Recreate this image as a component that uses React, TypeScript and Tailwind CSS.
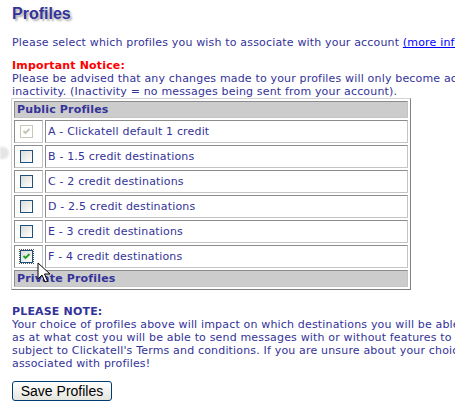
import React from 'react';

const font = { fontFamily: '"DejaVu Sans", Verdana, sans-serif' };

type Box = 'off' | 'on' | 'disabled';

function CheckBox({ state }: { state: Box }) {
    if (state === 'disabled') {
        return (
            <span className="block w-[13px] h-[13px] border border-[#cac8bb] bg-white">
                <svg width="11" height="11" viewBox="0 0 11 11">
                    <path d="M2.5 5 L4.5 7 L8.5 3" stroke="#c4c2b4" strokeWidth="1.8" fill="none" />
                </svg>
            </span>
        );
    }
    return (
        <span className={`block w-[15px] h-[15px] -m-px border border-dotted ${state === 'on' ? 'border-[#555]' : 'border-transparent'}`}>
            <span className="block w-[13px] h-[13px] border border-[#1c5180] bg-gradient-to-br from-[#dcdcd7] to-white">
                {state === 'on' && (
                    <svg width="11" height="11" viewBox="0 0 11 11">
                        <path d="M2.5 5 L4.5 7 L8.5 3" stroke="#21a121" strokeWidth="1.8" fill="none" />
                    </svg>
                )}
            </span>
        </span>
    );
}

const rows: { label: string; state: Box }[] = [
    { label: 'A - Clickatell default 1 credit', state: 'disabled' },
    { label: 'B - 1.5 credit destinations', state: 'off' },
    { label: 'C - 2 credit destinations', state: 'off' },
    { label: 'D - 2.5 credit destinations', state: 'off' },
    { label: 'E - 3 credit destinations', state: 'off' },
    { label: 'F - 4 credit destinations', state: 'on' },
];

const cell = 'border border-t-[#8c8c8c] border-l-[#8c8c8c] border-b-[#c4c4c4] border-r-[#c4c4c4] p-0';

export default function App() {
    return (
        <div className="relative w-[455px] h-[409px] overflow-hidden bg-white pl-3 pt-px text-[11px] leading-[13px] tracking-[0.17px] text-[#333399]" style={font}>
            <h1 className="pt-[3px] h-[35px] text-[16px] leading-[20px] font-bold tracking-normal text-[#333399] [text-shadow:2px_2px_2px_#b0b0b0]" style={{ fontFamily: '"Liberation Sans", Arial, sans-serif' }}>
                Profiles
            </h1>
            <p className="whitespace-nowrap">
                Please select which profiles you wish to associate with your account{' '}
                <a className="text-[#0000ff] underline">(more info)</a>
            </p>
            <div className="mt-[10px] whitespace-nowrap">
                <div className="font-bold text-[#ff0000]">Important Notice:</div>
                <div>Please be advised that any changes made to your profiles will only become active after 24 hours of</div>
                <div>inactivity. (Inactivity = no messages being sent from your account).</div>
            </div>
            <table className="-ml-px w-[400px] border-separate border-spacing-[2px] border border-t-[#d4d4d4] border-l-[#d4d4d4] border-b-[#808080] border-r-[#808080]">
                <tbody>
                    <tr>
                        <td colSpan={2} className={`${cell} h-[17px] bg-[#cccccc] pl-[2px] font-bold`}>Public Profiles</td>
                    </tr>
                    {rows.map((r) => (
                        <tr key={r.label}>
                            <td className={`${cell} w-[29px] h-[23px]`}>
                                <div className="pl-[5px]">
                                    <CheckBox state={r.state} />
                                </div>
                            </td>
                            <td className={`${cell} pl-[2px] whitespace-nowrap`}>{r.label}</td>
                        </tr>
                    ))}
                    <tr>
                        <td colSpan={2} className={`${cell} h-[17px] bg-[#cccccc] pl-[2px] font-bold`}>Private Profiles</td>
                    </tr>
                </tbody>
            </table>
            <div className="mt-[15px] whitespace-nowrap">
                <div className="font-bold">PLEASE NOTE:</div>
                <div>Your choice of profiles above will impact on which destinations you will be able to send messages to, as well</div>
                <div>as at what cost you will be able to send messages with or without features to these destinations,</div>
                <div>subject to Clickatell's Terms and conditions. If you are unsure about your choice, contact us about costs</div>
                <div>associated with profiles!</div>
            </div>
            <button
                className="mt-[11px] w-[100px] h-[20px] rounded-[3px] border border-[#003c74] bg-gradient-to-b from-white to-[#e6e5de] text-[14px] leading-[18px] tracking-normal text-black"
                style={{ fontFamily: '"Liberation Sans", Arial, sans-serif' }}
            >
                Save Profiles
            </button>

            {/* faint arrow at the left edge */}
            <div className="absolute left-0 top-[147px] w-[9px] h-[12px] rounded-r-full bg-[#e4e4e4] blur-[1px]" />

            {/* mouse pointer */}
            <svg className="absolute left-[37px] top-[262px]" width="14" height="22" viewBox="0 0 14 22">
                <path d="M1 1 L1 17 L5 13 L8 20 L10.5 19 L7.5 12 L13 12 Z" fill="white" stroke="black" strokeWidth="1" strokeLinejoin="miter" />
            </svg>
        </div>
    );
}
